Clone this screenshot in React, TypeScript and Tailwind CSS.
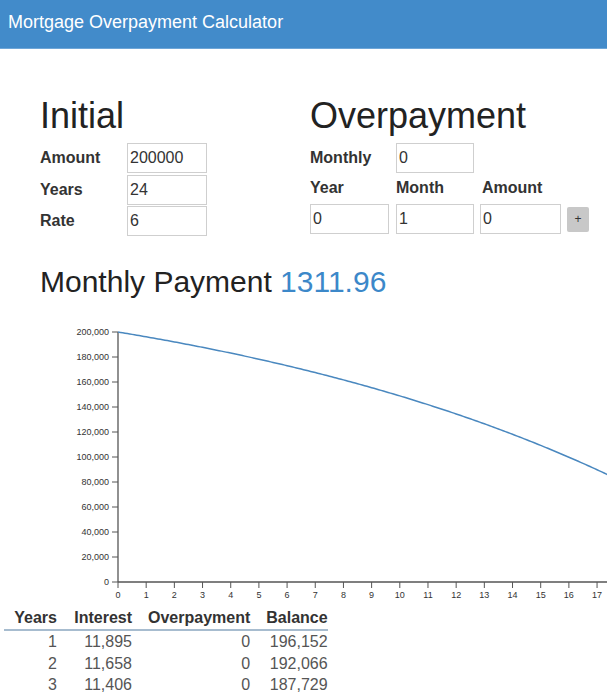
import React from "react";

const P0 = 200000;
const r = 0.06 / 12;
const n = 24 * 12;
const pay = (P0 * r) / (1 - Math.pow(1 + r, -n));

function balances() {
  const pts: number[] = [P0];
  let b = P0;
  for (let i = 1; i <= n; i++) {
    b = b * (1 + r) - pay;
    pts.push(Math.max(b, 0));
  }
  return pts;
}

function yearly() {
  const rows: { y: number; interest: number; bal: number }[] = [];
  let b = P0;
  for (let y = 1; y <= 3; y++) {
    let interest = 0;
    for (let m = 0; m < 12; m++) {
      const i = b * r;
      interest += i;
      b = b + i - pay;
    }
    rows.push({ y, interest, bal: b });
  }
  return rows;
}

const fmt = (v: number) => Math.round(v).toLocaleString("en-US");

function Field({ value, w }: { value: string; w: string }) {
  return (
    <div
      className={`${w} h-[30px] border border-[#cfcfcf] bg-white px-[2px] text-[16px] leading-[28px] text-[#333]`}
    >
      {value}
    </div>
  );
}

function Chart() {
  const pts = balances();
  const x0 = 118;
  const dx = 28.18;
  const y0 = 265;
  const sy = 250 / 200000;
  const d = pts
    .map((b, i) => `${i === 0 ? "M" : "L"}${(x0 + (i / 12) * dx).toFixed(2)},${(y0 - b * sy).toFixed(2)}`)
    .join(" ");
  const yt = Array.from({ length: 11 }, (_, i) => i * 20000);
  const xt = Array.from({ length: 18 }, (_, i) => i);
  return (
    <svg width={607} height={290} className="block overflow-hidden" style={{ fontFamily: "'Liberation Sans', Arial, sans-serif" }}>
      <line x1={x0} y1={y0 - 200000 * sy} x2={x0} y2={y0} stroke="#555" strokeWidth={1.3} />
      <line x1={x0} y1={y0} x2={607} y2={y0} stroke="#555" strokeWidth={1.3} />
      {yt.map((v) => (
        <g key={v}>
          <line x1={x0 - 6} x2={x0} y1={y0 - v * sy} y2={y0 - v * sy} stroke="#555" strokeWidth={1} />
          <text x={x0 - 9} y={y0 - v * sy + 3.3} textAnchor="end" fontSize={9} fill="#333">
            {v.toLocaleString("en-US")}
          </text>
        </g>
      ))}
      {xt.map((v) => (
        <g key={v}>
          <line x1={x0 + v * dx} x2={x0 + v * dx} y1={y0} y2={y0 + 6} stroke="#555" strokeWidth={1} />
          <text x={x0 + v * dx} y={y0 + 16} textAnchor="middle" fontSize={9} fill="#333">
            {v}
          </text>
        </g>
      ))}
      <path d={d} fill="none" stroke="#4a88bf" strokeWidth={1.5} />
    </svg>
  );
}

export default function App() {
  const rows = yearly();
  return (
    <div className="w-[607px] h-[700px] overflow-hidden bg-white text-[#333]" style={{ fontFamily: "'Liberation Sans', Arial, sans-serif" }}>
      <div className="h-[49px] bg-[#428bca] border-b border-[#6ea6d8] pl-[8px] pt-[12px]">
        <div className="text-[18px] leading-[20px] text-white">Mortgage Overpayment Calculator</div>
      </div>
      <div className="flex pl-[40px] pt-[47px]">
        <div className="w-[270px]">
          <h1 className="text-[36px] leading-[40px] text-[#222]">Initial</h1>
          <div className="mt-[7px] flex flex-col gap-[1.5px]">
            {[
              ["Amount", "200000"],
              ["Years", "24"],
              ["Rate", "6"],
            ].map(([l, v]) => (
              <div key={l} className="flex items-center">
                <div className="w-[87px] text-[16px] font-bold text-[#333]">{l}</div>
                <Field value={v} w="w-[80px]" />
              </div>
            ))}
          </div>
        </div>
        <div>
          <h1 className="text-[36px] leading-[40px] text-[#222]">Overpayment</h1>
          <div className="mt-[7px] flex items-center">
            <div className="w-[86px] text-[16px] font-bold">Monthly</div>
            <Field value="0" w="w-[78px]" />
          </div>
          <div className="mt-[4px] flex text-[16px] font-bold leading-[22px]">
            <div className="w-[86px]">Year</div>
            <div className="w-[86px]">Month</div>
            <div>Amount</div>
          </div>
          <div className="mt-[5px] flex items-center">
            <Field value="0" w="w-[79px]" />
            <div className="ml-[7px]">
              <Field value="1" w="w-[78px]" />
            </div>
            <div className="ml-[6px]">
              <Field value="0" w="w-[81px]" />
            </div>
            <div className="ml-[6px] flex h-[25px] w-[22px] items-center justify-center rounded-[2px] bg-[#c8c8c8] text-[12px] leading-none text-[#333]">
              +
            </div>
          </div>
        </div>
      </div>
      <h2 className="mt-[29px] pl-[40px] text-[30px] leading-[34px] text-[#222]">
        Monthly Payment <span className="text-[#3c88c9]">{pay.toFixed(2)}</span>
      </h2>
      <div className="mt-[18px]">
        <Chart />
      </div>
      <table className="ml-[4px] border-collapse text-[16px]">
        <thead>
          <tr className="border-b-2 border-[#a7bccf] font-bold text-[#333]">
            <th className="w-[61px] pr-[8px] text-right leading-[22px]">Years</th>
            <th className="w-[75px] px-[8px] text-right leading-[22px]">Interest</th>
            <th className="w-[118px] px-[8px] text-right leading-[22px]">Overpayment</th>
            <th className="w-[69px] pl-[8px] text-right leading-[22px]">Balance</th>
          </tr>
        </thead>
        <tbody className="text-[#555]">
          {rows.map((row) => (
            <tr key={row.y}>
              <td className="pr-[8px] text-right leading-[21.5px]">{row.y}</td>
              <td className="px-[8px] text-right leading-[21.5px]">{fmt(row.interest)}</td>
              <td className="px-[8px] text-right leading-[21.5px]">0</td>
              <td className="pl-[8px] text-right leading-[21.5px]">{fmt(row.bal)}</td>
            </tr>
          ))}
        </tbody>
      </table>
    </div>
  );
}
